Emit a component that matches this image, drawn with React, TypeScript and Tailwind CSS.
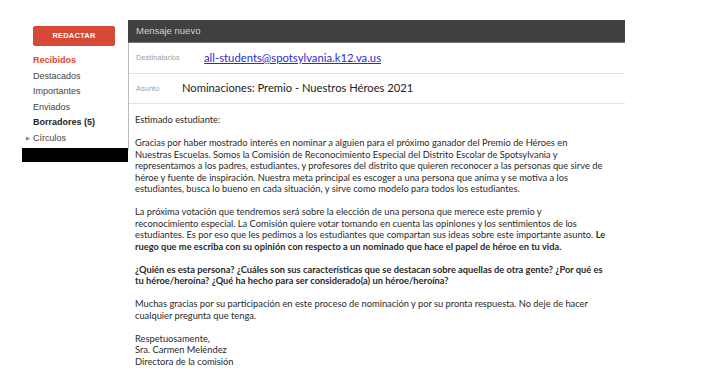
import React from 'react';

const navItems = [
  { label: 'Destacados' },
  { label: 'Importantes' },
  { label: 'Enviados' },
];

const Sidebar: React.FC = () => (
  <aside className="ml-[22px] w-[106px] shrink-0 flex flex-col font-['Liberation_Sans',Arial,sans-serif]">
    <button className="ml-[11px] mt-[6px] w-[82px] h-[20px] rounded-[2px] bg-[#d64937] text-white text-[7.5px] font-bold tracking-[0.2px]">
      REDACTAR
    </button>
    <nav className="mt-[7px] flex flex-col text-[9px] leading-[15.6px] text-[#444]">
      <a className="pl-[11px] font-bold text-[#d64937]">Recibidos</a>
      {navItems.map((item) => (
        <a key={item.label} className="pl-[11px]">
          {item.label}
        </a>
      ))}
      <a className="pl-[11px] font-bold text-[#222]">Borradores (5)</a>
      <div className="flex items-center pl-[4px]">
        <span className="w-[7px] text-[5px] text-[#777]">▶</span>
        <span>Círculos</span>
      </div>
    </nav>
    <div className="mt-[1px] h-[14px] w-[106px] bg-black" />
  </aside>
);

const Line: React.FC<{ children: React.ReactNode; bold?: boolean }> = ({ children, bold }) => (
  <div className={`whitespace-nowrap ${bold ? 'font-bold' : ''}`}>{children}</div>
);

const Compose: React.FC = () => (
  <section className="w-[497px] shrink-0 flex flex-col">
    <header className="h-[23px] bg-[#404040] border-b border-[#777] flex items-center pl-[8px] text-[9.5px] text-[#d0d0d0] font-['Liberation_Sans',Arial,sans-serif]">
      Mensaje nuevo
    </header>
    <div className="border-l border-[#bbb]">
      <div className="h-[31px] flex items-center border-b border-[#e3e3e3] pl-[7px]">
        <span className="text-[7.5px] text-[#a0a0a0] font-['Liberation_Sans',Arial,sans-serif] w-[68px]">
          Destinatarios
        </span>
        <a className="font-['Lato',sans-serif] text-[11.3px] text-[#2a2ad8] underline">
          all-students@spotsylvania.k12.va.us
        </a>
      </div>
      <div className="h-[30px] flex items-center border-b border-[#e3e3e3] pl-[7px]">
        <span className="text-[7.5px] text-[#a0a0a0] font-['Liberation_Sans',Arial,sans-serif] w-[46px]">
          Asunto
        </span>
        <span className="font-['Lato',sans-serif] text-[11.2px] text-[#222]">
          Nominaciones: Premio - Nuestros Héroes 2021
        </span>
      </div>
      <div className="h-[46px]" />
    </div>
    <div className="-mt-[46px] pl-[7px] pt-[10px] font-['Lato',sans-serif] text-[9.3px] leading-[11.5px] text-[#2a2a2a]">
      <div className="mb-[11.5px]">
        <Line>Estimado estudiante:</Line>
      </div>
      <div className="mb-[11.5px]">
        <Line>Gracias por haber mostrado interés en nominar a alguien para el próximo ganador del Premio de Héroes en</Line>
        <Line>Nuestras Escuelas. Somos la Comisión de Reconocimiento Especial del Distrito Escolar de Spotsylvania y</Line>
        <Line>representamos a los padres, estudiantes, y profesores del distrito que quieren reconocer a las personas que sirve de</Line>
        <Line>héroe y fuente de inspiración. Nuestra meta principal es escoger a una persona que anima y se motiva a los</Line>
        <Line>estudiantes, busca lo bueno en cada situación, y sirve como modelo para todos los estudiantes.</Line>
      </div>
      <div className="mb-[11.5px]">
        <Line>La próxima votación que tendremos será sobre la elección de una persona que merece este premio y</Line>
        <Line>reconocimiento especial. La Comisión quiere votar tomando en cuenta las opiniones y los sentimientos de los</Line>
        <Line>
          estudiantes. Es por eso que les pedimos a los estudiantes que compartan sus ideas sobre este importante asunto.{' '}
          <b>Le</b>
        </Line>
        <Line bold>ruego que me escriba con su opinión con respecto a un nominado que hace el papel de héroe en tu vida.</Line>
      </div>
      <div className="mb-[11.5px]">
        <Line bold>¿Quién es esta persona? ¿Cuáles son sus características que se destacan sobre aquellas de otra gente? ¿Por qué es</Line>
        <Line bold>tu héroe/heroína? ¿Qué ha hecho para ser considerado(a) un héroe/heroína?</Line>
      </div>
      <div className="mb-[11.5px]">
        <Line>Muchas gracias por su participación en este proceso de nominación y por su pronta respuesta. No deje de hacer</Line>
        <Line>cualquier pregunta que tenga.</Line>
      </div>
      <div>
        <Line>Respetuosamente,</Line>
        <Line>Sra. Carmen Meléndez</Line>
        <Line>Directora de la comisión</Line>
      </div>
    </div>
  </section>
);

export default function App() {
  return (
    <div className="w-[723px] h-[389px] overflow-hidden bg-white pt-[20px] flex items-start">
      <Sidebar />
      <Compose />
    </div>
  );
}
